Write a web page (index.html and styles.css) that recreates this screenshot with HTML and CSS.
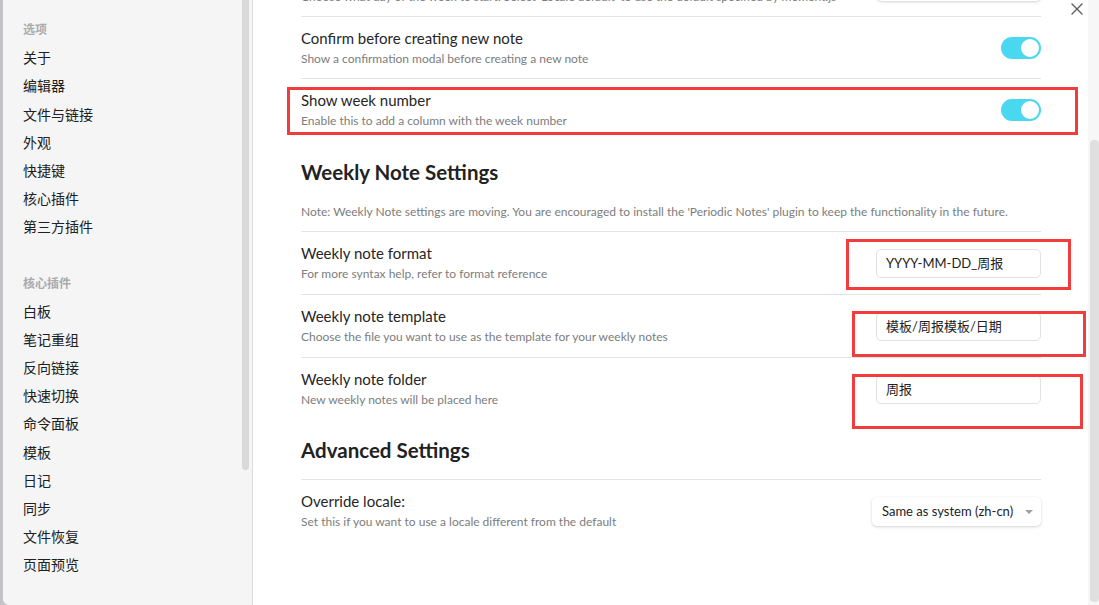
FILE: index.html
```html
<!DOCTYPE html>
<html lang="zh-CN">
<head>
<meta charset="utf-8">
<title>Settings</title>
<link rel="stylesheet" href="styles.css">
</head>
<body>
<div class="page">
  <div class="edge"></div>
  <div class="modal">
    <aside class="sidebar">
      <nav class="nav">
        <div class="nav-group">
          <div class="nav-header">选项</div>
          <div class="nav-item">关于</div>
          <div class="nav-item">编辑器</div>
          <div class="nav-item">文件与链接</div>
          <div class="nav-item">外观</div>
          <div class="nav-item">快捷键</div>
          <div class="nav-item">核心插件</div>
          <div class="nav-item">第三方插件</div>
        </div>
        <div class="nav-group">
          <div class="nav-header">核心插件</div>
          <div class="nav-item">白板</div>
          <div class="nav-item">笔记重组</div>
          <div class="nav-item">反向链接</div>
          <div class="nav-item">快速切换</div>
          <div class="nav-item">命令面板</div>
          <div class="nav-item">模板</div>
          <div class="nav-item">日记</div>
          <div class="nav-item">同步</div>
          <div class="nav-item">文件恢复</div>
          <div class="nav-item">页面预览</div>
        </div>
      </nav>
      <div class="side-scroll"><div class="side-thumb"></div></div>
    </aside>

    <main class="content">
      <div class="setting partial">
        <div class="info">
          <div class="name">Start week on</div>
          <div class="desc">Choose what day of the week to start. Select 'Locale default' to use the default specified by moment.js</div>
        </div>
        <div class="select">Locale default<span class="caret"></span></div>
      </div>

      <div class="setting">
        <div class="info">
          <div class="name">Confirm before creating new note</div>
          <div class="desc">Show a confirmation modal before creating a new note</div>
        </div>
        <div class="toggle"><span class="knob"></span></div>
      </div>

      <div class="setting">
        <div class="info">
          <div class="name">Show week number</div>
          <div class="desc">Enable this to add a column with the week number</div>
        </div>
        <div class="toggle"><span class="knob"></span></div>
      </div>

      <h2 class="heading">Weekly Note Settings</h2>
      <div class="note">Note: Weekly Note settings are moving. You are encouraged to install the 'Periodic Notes' plugin to keep the functionality in the future.</div>

      <div class="setting tall">
        <div class="info">
          <div class="name">Weekly note format</div>
          <div class="desc">For more syntax help, refer to format reference</div>
        </div>
        <div class="input">YYYY-MM-DD_周报</div>
      </div>

      <div class="setting tall">
        <div class="info">
          <div class="name">Weekly note template</div>
          <div class="desc">Choose the file you want to use as the template for your weekly notes</div>
        </div>
        <div class="input">模板/周报模板/日期</div>
      </div>

      <div class="setting tall">
        <div class="info">
          <div class="name">Weekly note folder</div>
          <div class="desc">New weekly notes will be placed here</div>
        </div>
        <div class="input">周报</div>
      </div>

      <h2 class="heading heading-adv">Advanced Settings</h2>

      <div class="setting">
        <div class="info">
          <div class="name">Override locale:</div>
          <div class="desc">Set this if you want to use a locale different from the default</div>
        </div>
        <div class="select wide">Same as system (zh-cn)<span class="caret"></span></div>
      </div>
    </main>

    <div class="main-scroll"><div class="main-thumb"></div></div>

    <div class="close">
      <svg width="12" height="12" viewBox="0 0 12 12"><path d="M1 1 L11 11 M11 1 L1 11" stroke="#5c5c5c" stroke-width="1.4" fill="none" stroke-linecap="round"/></svg>
    </div>
  </div>

  <div class="mark mark-1"></div>
  <div class="mark mark-2"></div>
  <div class="mark mark-3"></div>
  <div class="mark mark-4"></div>
</div>
</body>
</html>
```

FILE: styles.css
```css
* { box-sizing: border-box; }

html, body {
  margin: 0;
  padding: 0;
  width: 1099px;
  height: 605px;
  overflow: hidden;
  background: #c9c9cc;
  font-family: "Lato", "Noto Sans CJK SC", sans-serif;
}

.page {
  position: relative;
  display: flex;
  width: 1099px;
  height: 605px;
}

.edge {
  width: 3px;
  flex: none;
  background: #c4c4c8;
}

.modal {
  position: relative;
  flex: 1;
  display: flex;
  height: 605px;
  background: #fff;
  border-bottom-left-radius: 7px;
  overflow: hidden;
}

/* Sidebar */
.sidebar {
  width: 250px;
  flex: none;
  display: flex;
  background: #f5f5f5;
  border-right: 1px solid #dcdcdc;
}

.nav {
  flex: 1;
  padding: 15px 0 0 20px;
  display: flex;
  flex-direction: column;
  gap: 28px;
}

.nav-header,
.nav-item {
  height: 28.2px;
  line-height: 28px;
  font-family: "Noto Sans CJK SC", sans-serif;
}

.nav-header {
  font-size: 12px;
  font-weight: 700;
  color: #ababab;
}

.nav-item {
  font-size: 14px;
  color: #202020;
}

.side-scroll {
  width: 7px;
  margin-right: 3px;
  flex: none;
}

.side-thumb {
  height: 470px;
  background: #d9d9d9;
  border-radius: 0 0 3px 3px;
}

/* Main content */
.content {
  flex: 1;
  padding: 0 47px 0 48px;
  display: flex;
  flex-direction: column;
}

.setting {
  display: flex;
  align-items: center;
  justify-content: space-between;
  border-top: 1px solid #e3e3e3;
  padding: 11px 0 10px;
  min-height: 62px;
}

.setting.tall {
  padding-bottom: 11px;
  min-height: 63px;
}

.setting.partial {
  border-top: none;
  margin-top: -45px;
  min-height: 61px;
}

.info {
  display: flex;
  flex-direction: column;
  gap: 2px;
}

.name {
  font-size: 15px;
  line-height: 20px;
  color: #262626;
}

.desc {
  font-size: 12px;
  line-height: 18px;
  color: #7d7d7d;
}

.heading {
  margin: 0;
  padding: 18px 0 15px;
  font-size: 20.5px;
  line-height: 28px;
  font-weight: 700;
  color: #222;
}

.heading-adv {
  padding-top: 16px;
}

.note {
  font-size: 12px;
  line-height: 18px;
  color: #7d7d7d;
  padding: 2px 0 10px;
}

/* Toggle */
.toggle {
  position: relative;
  width: 40px;
  height: 22px;
  border-radius: 11px;
  background: #4ad8f0;
  flex: none;
}

.knob {
  position: absolute;
  top: 2px;
  right: 2px;
  width: 18px;
  height: 18px;
  border-radius: 50%;
  background: #fff;
}

/* Inputs */
.input {
  width: 165px;
  height: 29px;
  flex: none;
  border: 1px solid #e2e2e2;
  border-radius: 5px;
  background: #fff;
  padding: 0 9px;
  font-size: 13px;
  line-height: 27px;
  color: #222;
}

.select {
  position: relative;
  width: 164px;
  height: 29px;
  flex: none;
  border-radius: 5px;
  background: #fff;
  box-shadow: 0 1px 3px rgba(0, 0, 0, 0.18);
  padding: 0 24px 0 10px;
  font-size: 13px;
  line-height: 29px;
  color: #222;
  white-space: nowrap;
}

.select.wide {
  width: 169px;
}

.caret {
  position: absolute;
  right: 8px;
  top: 13px;
  width: 0;
  height: 0;
  border-left: 4px solid transparent;
  border-right: 4px solid transparent;
  border-top: 4px solid #a0a0a0;
}

/* Right scrollbar */
.main-scroll {
  width: 11px;
  flex: none;
  background: #f7f7f7;
  padding: 140px 0 3px 2px;
}

.main-thumb {
  height: 100%;
  background: #e0e0e0;
  border-radius: 4px;
}

.close {
  position: absolute;
  top: 3px;
  right: 16px;
  width: 12px;
  height: 12px;
  display: flex;
}

/* Red annotation boxes */
.mark {
  position: absolute;
  border: 3px solid #f03c3c;
}

.mark-1 { left: 287px; top: 87px; width: 791px; height: 48px; }
.mark-2 { left: 846px; top: 239px; width: 225px; height: 51px; }
.mark-3 { left: 852px; top: 311px; width: 234px; height: 46px; }
.mark-4 { left: 852px; top: 374px; width: 231px; height: 55px; }
```
